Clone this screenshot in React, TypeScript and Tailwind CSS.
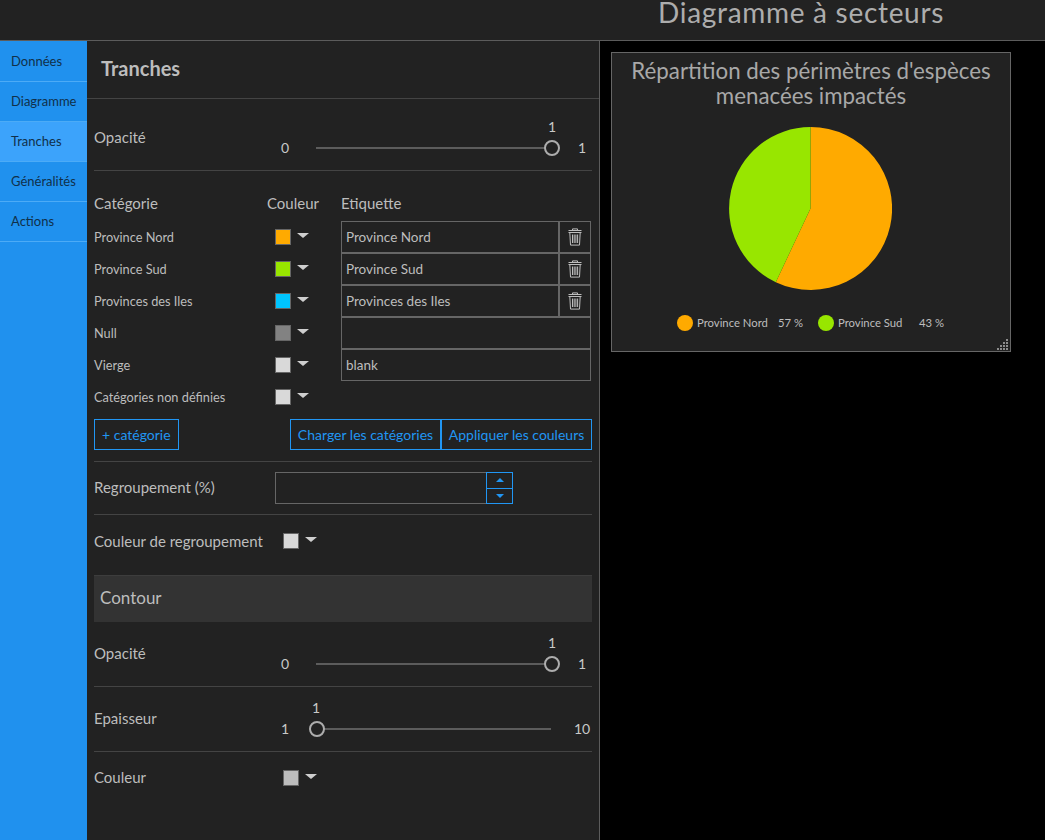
const menuItems = ['Données', 'Diagramme', 'Tranches', 'Généralités', 'Actions']

const categories = [
  { name: 'Province Nord', color: 'bg-[#ffaa00]', label: 'Province Nord', removable: true },
  { name: 'Province Sud', color: 'bg-[#98e600]', label: 'Province Sud', removable: true },
  { name: 'Provinces des Iles', color: 'bg-[#00c5ff]', label: 'Provinces des Iles', removable: true },
  { name: 'Null', color: 'bg-[#828282]', label: '', removable: false },
  { name: 'Vierge', color: 'bg-[#d9d9d9]', label: 'blank', removable: false },
  { name: 'Catégories non définies', color: 'bg-[#d9d9d9]', label: null, removable: false },
]

function TrashIcon() {
  return (
    <svg width="14" height="18" viewBox="0 0 14 18" fill="none" stroke="#bdbdbd" strokeWidth="1">
      <path d="M4.5 2.5V.9h5v1.6" />
      <path d="M.5 2.5h13M.5 4.5h13" />
      <path d="M1.8 4.5l.7 12.6h9l.7-12.6" />
      <path d="M4.5 6.5v8.5M6.2 6.5v8.5M7.9 6.5v8.5M9.6 6.5v8.5" />
    </svg>
  )
}

function Swatch({ color }: { color: string }) {
  return (
    <div className="flex items-center">
      <div className={`w-4 h-4 border border-[#666] ${color}`}></div>
      <div className="ml-[6px] -mt-[3px] w-0 h-0 border-x-[6px] border-x-transparent border-t-[5px] border-t-[#cfcfcf]"></div>
    </div>
  )
}

function Slider({ label, min, max, thumbAt, first }: { label: string; min: string; max: string; thumbAt: 'start' | 'end'; first?: boolean }) {
  const isEnd = thumbAt === 'end'
  return (
    <div className={`relative border-b border-[#444] ${first ? 'h-[72px]' : 'h-[65px]'}`}>
      <div className={`absolute left-0 text-[15px] leading-5 ${first ? 'top-[28px]' : 'top-[21px]'}`}>{label}</div>
      <div className={`absolute left-[181px] right-0 flex items-center h-5 text-sm text-[#c8c8c8] ${first ? 'top-[39px]' : 'top-[32px]'}`}>
        <span className="w-5 text-center">{min}</span>
        <div className={`relative ml-[21px] h-[2px] bg-[#5c5c5c] ${isEnd ? 'w-[236px]' : 'w-[235px]'}`}>
          <div className={`absolute -top-[7px] w-4 h-4 rounded-full border-2 border-[#adadad] bg-[#222] ${isEnd ? '-right-2' : '-left-[7px]'}`}></div>
          <span className={`absolute -top-[30px] w-5 text-center ${isEnd ? '-right-[10px]' : '-left-[10px]'}`}>1</span>
        </div>
        <span className={`flex-1 ${isEnd ? 'pl-[26px]' : 'pl-[23px]'}`}>{max}</span>
      </div>
    </div>
  )
}

function PieChart() {
  return (
    <svg width="163" height="163" viewBox="0 0 163 163">
      <path d="M81.5 81.5V0A81.5 81.5 0 1 1 46.8 155.2Z" fill="#ffaa00" />
      <path d="M81.5 81.5L46.8 155.2A81.5 81.5 0 0 1 81.5 0Z" fill="#98e600" />
    </svg>
  )
}

export default function App() {
  return (
    <div
      className="w-[1045px] h-[840px] overflow-hidden bg-black text-[#bdbdbd] flex flex-col"
      style={{ fontFamily: 'Lato, "Open Sans", sans-serif' }}
    >
      {/* header */}
      <div className="h-[41px] shrink-0 bg-[#222] border-b border-[#5c5c5c] pl-[658px]">
        <h1 className="text-[28px] leading-[24px] tracking-[0.7px] font-normal text-[#adadad]">Diagramme à secteurs</h1>
      </div>

      <div className="flex flex-1 min-h-0">
        {/* menu */}
        <div className="w-[87px] shrink-0 bg-[#2091ee] pt-px">
          {menuItems.map((item) => (
            <div
              key={item}
              className={`h-10 flex items-center pl-[11px] text-[13px] text-[#10304a] border-b border-[#4cabf6] ${
                item === 'Tranches' ? 'bg-[#3ca3fb]' : ''
              }`}
            >
              {item}
            </div>
          ))}
        </div>

        {/* settings */}
        <div className="w-[513px] shrink-0 bg-[#222] border-r border-[#5c5c5c]">
          <div className="h-[58px] flex items-center pl-[14px] pb-[4px] border-b border-[#444]">
            <h2 className="text-xl font-bold text-[#bdbdbd]">Tranches</h2>
          </div>

          <div className="px-[7px]">
            <Slider first label="Opacité" min="0" max="1" thumbAt="end" />

            {/* table */}
            <div className="h-[291px] border-b border-[#444] pt-[22px]">
              <div className="grid grid-cols-[173px_74px_1fr] text-[15px] leading-5 h-[28px]">
                <span>Catégorie</span>
                <span>Couleur</span>
                <span>Etiquette</span>
              </div>
              {categories.map((cat) => (
                <div key={cat.name} className="grid grid-cols-[181px_66px_250px] h-8 items-center text-[12.75px]">
                  <span className="mt-[2px]">{cat.name}</span>
                  <Swatch color={cat.color} />
                  {cat.label !== null && (
                    <div className="flex h-8">
                      <div className="flex-1 flex items-center pl-1 border border-[#666] text-[13.5px]">{cat.label}</div>
                      {cat.removable && (
                        <div className="w-8 flex items-center justify-center border border-[#666]">
                          <TrashIcon />
                        </div>
                      )}
                    </div>
                  )}
                </div>
              ))}
              <div className="flex justify-between mt-[6px] text-sm text-[#2196f3]">
                <button className="h-[31px] px-[7px] border border-[#2196f3]">+ catégorie</button>
                <div className="flex">
                  <button className="h-[31px] w-[151px] border border-[#2196f3]">Charger les catégories</button>
                  <button className="h-[31px] w-[151px] border border-[#2196f3]">Appliquer les couleurs</button>
                </div>
              </div>
            </div>

            {/* grouping */}
            <div className="h-[53px] flex items-center border-b border-[#444]">
              <span className="w-[181px] -mt-[2px] text-[15px]">Regroupement (%)</span>
              <div className="w-[212px] h-8 border border-[#666]"></div>
              <div className="w-[27px] h-8 flex flex-col border border-[#2196f3] -ml-px">
                <div className="flex-1 flex items-center justify-center border-b border-[#2196f3]">
                  <div className="w-0 h-0 border-x-[4px] border-x-transparent border-b-[4px] border-b-[#2196f3]"></div>
                </div>
                <div className="flex-1 flex items-center justify-center">
                  <div className="w-0 h-0 border-x-[4px] border-x-transparent border-t-[4px] border-t-[#2196f3]"></div>
                </div>
              </div>
            </div>

            <div className="h-[52px] flex items-center">
              <span className="w-[189px] text-[15px]">Couleur de regroupement</span>
              <Swatch color="bg-[#d9d9d9]" />
            </div>

            {/* outline */}
            <div className="mt-[8px] h-[47px] flex items-center pl-[6px] pb-[2px] bg-[#333] border-t border-[#3d3d3d] text-[17px]">Contour</div>
            <Slider label="Opacité" min="0" max="1" thumbAt="end" />
            <Slider label="Epaisseur" min="1" max="10" thumbAt="start" />
            <div className="h-[52px] flex items-center">
              <span className="w-[189px] -mt-[2px] text-[15px]">Couleur</span>
              <Swatch color="bg-[#bdbdbd]" />
            </div>
          </div>
        </div>

        {/* preview */}
        <div className="flex-1 pl-[11px] pt-[11px]">
          <div className="relative w-[400px] h-[300px] border border-[#666] bg-[#222] flex flex-col items-center">
            <h3 className="mt-[5px] text-[22.3px] leading-[25px] text-center text-[#a8a8a8]">
              Répartition des périmètres d'espèces
              <br />
              menacées impactés
            </h3>
            <div className="mt-[19px] -ml-[2px]">
              <PieChart />
            </div>
            <div className="mt-[25px] w-full pl-[65px] flex items-center text-[11.3px]">
              <span className="w-4 h-4 rounded-full bg-[#ffaa00]"></span>
              <span className="ml-1 w-[81px]">Province Nord</span>
              <span className="w-[40px]">57 %</span>
              <span className="w-4 h-4 rounded-full bg-[#98e600]"></span>
              <span className="ml-1 w-[81px]">Province Sud</span>
              <span>43 %</span>
            </div>
            <svg className="absolute right-[1px] bottom-[1px]" width="12" height="12" viewBox="0 0 12 12" fill="#8c8c8c">
              <rect x="9" y="1" width="2" height="2" />
              <rect x="6" y="4" width="2" height="2" />
              <rect x="9" y="4" width="2" height="2" />
              <rect x="3" y="7" width="2" height="2" />
              <rect x="6" y="7" width="2" height="2" />
              <rect x="9" y="7" width="2" height="2" />
              <rect x="0" y="10" width="2" height="2" />
              <rect x="3" y="10" width="2" height="2" />
              <rect x="6" y="10" width="2" height="2" />
              <rect x="9" y="10" width="2" height="2" />
            </svg>
          </div>
        </div>
      </div>
    </div>
  )
}
